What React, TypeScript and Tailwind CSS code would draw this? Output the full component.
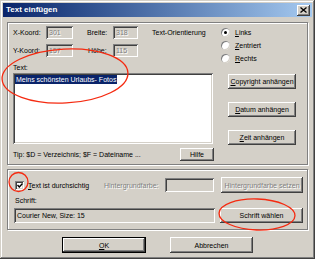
import { ReactNode } from "react";

const raised =
  "bg-[#d4d0c8] shadow-[inset_-1px_-1px_#404040,inset_1px_1px_#ffffff,inset_-2px_-2px_#808080,inset_2px_2px_#d4d0c8]";
const sunken =
  "shadow-[inset_1px_1px_#808080,inset_-1px_-1px_#ffffff,inset_2px_2px_#404040,inset_-2px_-2px_#d4d0c8]";
const etched = "border border-[#808080] shadow-[1px_1px_0_#ffffff,inset_1px_1px_0_#ffffff]";
const greyed = "text-[#808080] [text-shadow:1px_1px_0_#ffffff]";

function Btn({ children, className = "", disabled = false }: { children: ReactNode; className?: string; disabled?: boolean }) {
  return (
    <div className={`${raised} flex items-center justify-center whitespace-nowrap ${disabled ? greyed : ""} ${className}`}>
      <span>{children}</span>
    </div>
  );
}

function Field({ value, className = "" }: { value?: string; className?: string }) {
  return (
    <div className={`${sunken} bg-[#d4d0c8] flex items-center pl-[3px] ${className}`}>
      {value}
    </div>
  );
}

function Radio({ checked, children }: { checked?: boolean; children: ReactNode }) {
  return (
    <div className="flex items-center h-[13px]">
      <span className="w-[9px] h-[9px] rounded-full bg-white shadow-[inset_1px_1px_#808080,inset_-1px_-1px_#d4d0c8] flex items-center justify-center">
        {checked && <span className="w-[3px] h-[3px] rounded-full bg-black" />}
      </span>
      <span className="ml-[5px]">{children}</span>
    </div>
  );
}

export default function App() {
  return (
    <div className="relative w-[315px] h-[259px] bg-[#d4d0c8] p-[3px] flex flex-col font-['Liberation_Sans',Arial,sans-serif] text-[7px] leading-none text-black shadow-[inset_-1px_-1px_#404040,inset_1px_1px_#d4d0c8,inset_-2px_-2px_#808080,inset_2px_2px_#ffffff] overflow-hidden">
      {/* title bar */}
      <div className="h-[14px] flex items-center justify-between pl-[3px] pr-[2px] bg-gradient-to-r from-[#0a246a] to-[#a6caf0]">
        <span className="text-white font-bold text-[8px]">Text einfügen</span>
        <div className={`${raised} w-[13px] h-[11px] flex items-center justify-center`}>
          <svg width="7" height="6" viewBox="0 0 7 6">
            <path d="M0.5 0.5 L6.5 5.5 M6.5 0.5 L0.5 5.5" stroke="#000" strokeWidth="1.3" />
          </svg>
        </div>
      </div>

      <div className="flex-1 px-[4px] flex flex-col">
        {/* upper group */}
        <div className={`${etched} mt-[5px] pl-[5px] pt-[3px] pb-[3px] flex flex-col`}>
          <div className="flex items-start">
            <div className="flex flex-col gap-[5px]">
              <div className="flex items-center">
                <span className="w-[33px]">X-Koord:</span>
                <Field value="301" className={`w-[27px] h-[13px] ${greyed}`} />
                <span className="w-[26px] ml-[14px]">Breite:</span>
                <Field value="318" className={`w-[25px] h-[13px] ${greyed}`} />
              </div>
              <div className="flex items-center">
                <span className="w-[33px]">Y-Koord:</span>
                <Field value="157" className={`w-[27px] h-[13px] ${greyed}`} />
                <span className="w-[26px] ml-[14px] pl-[1px]">Höhe:</span>
                <Field value="115" className={`w-[25px] h-[13px] ${greyed}`} />
              </div>
            </div>
            <div className="flex ml-[14px]">
              <span className="w-[69px] h-[13px] flex items-center">Text-Orientierung</span>
              <div className="flex flex-col">
                <Radio checked>
                  <u>L</u>inks
                </Radio>
                <Radio>
                  <u>Z</u>entriert
                </Radio>
                <Radio>
                  <u>R</u>echts
                </Radio>
              </div>
            </div>
          </div>

          <span className="h-[9px] flex items-center -mt-[2px]">Text:</span>

          <div className="flex mt-[1px]">
            <div className={`${sunken} bg-white w-[200px] h-[71px] p-[2px]`}>
              <span className="bg-[#0a246a] text-white px-[1px] inline-block leading-[9px]">Meins schönsten Urlaubs- Fotos</span>
            </div>
            <div className="flex flex-col ml-[15px] pt-[1px] gap-[13px]">
              <Btn className="w-[68px] h-[15px]">
                <u>C</u>opyright anhängen
              </Btn>
              <Btn className="w-[68px] h-[15px]">
                <u>D</u>atum anhängen
              </Btn>
              <Btn className="w-[68px] h-[15px]">
                <u>Z</u>eit anhängen
              </Btn>
            </div>
          </div>

          <div className="flex items-center mt-[3px]">
            <span className="w-[167px]">Tip: $D = Verzeichnis; $F = Dateiname ...</span>
            <Btn className="w-[34px] h-[13px]">Hilfe</Btn>
          </div>
        </div>

        {/* lower group */}
        <div className={`${etched} mt-[4px] pl-[6px] pt-[7px] pb-[6px] flex flex-col`}>
          <div className="flex items-center h-[16px]">
            <span className={`${sunken} bg-white w-[9px] h-[9px] ml-[1px] flex items-center justify-center`}>
              <svg width="6" height="5" viewBox="0 0 6 5">
                <path d="M0.5 2 L2.3 4 L5.5 0.5" stroke="#000" strokeWidth="1.4" fill="none" />
              </svg>
            </span>
            <span className="w-[76px] ml-[4px]">
              <u>T</u>ext ist durchsichtig
            </span>
            <span className={`w-[61px] ${greyed}`}>Hintergrundfarbe:</span>
            <Field className="w-[49px] h-[14px]" />
            <Btn disabled className="w-[82px] h-[16px] ml-[7px]">
              Hintergrundfarbe setzen
            </Btn>
          </div>
          <span className="h-[9px] mt-[3px] pl-[1px] flex items-center">Schrift:</span>
          <div className="flex items-center mt-[3px]">
            <Field value="Courier New, Size: 15" className="w-[201px] h-[15px]" />
            <Btn className="w-[83px] h-[15px] ml-[5px]">Schrift wählen</Btn>
          </div>
        </div>

        {/* dialog buttons */}
        <div className="flex justify-center gap-[24px] mt-[7px]">
          <Btn className="w-[84px] h-[16px] outline outline-1 outline-black -outline-offset-1 shadow-[inset_-2px_-2px_#404040,inset_2px_2px_#ffffff,inset_-3px_-3px_#808080]">
            <u>O</u>K
          </Btn>
          <Btn className="w-[83px] h-[16px]">Abbrechen</Btn>
        </div>
      </div>

      {/* red annotation marks */}
      <svg className="absolute inset-0 pointer-events-none" width="315" height="259" viewBox="0 0 315 259">
        <g fill="none" stroke="#f52a10" strokeWidth="1.3">
          <ellipse cx="65" cy="76" rx="63" ry="27" transform="rotate(-3 65 76)" />
          <circle cx="18.5" cy="182" r="9.5" />
          <ellipse cx="257" cy="214.5" rx="38" ry="15.5" transform="rotate(2 257 214.5)" />
        </g>
      </svg>
    </div>
  );
}
